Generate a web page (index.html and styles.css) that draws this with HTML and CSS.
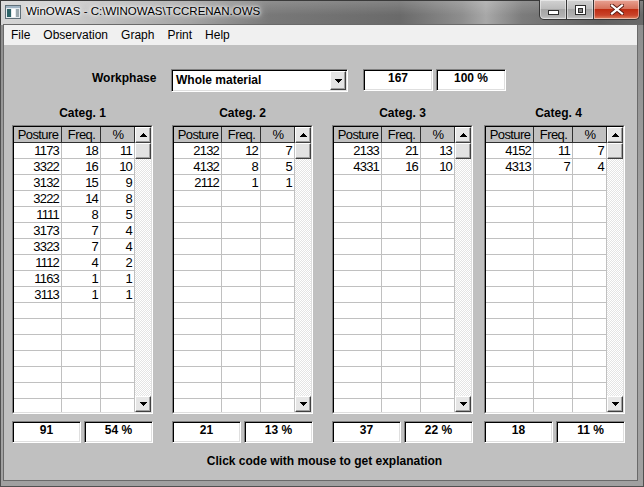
FILE: index.html
```html
<!DOCTYPE html>
<html>
<head>
<meta charset="utf-8">
<title>WinOWAS</title>
<link rel="stylesheet" href="styles.css">
</head>
<body>
<div class="window">
  <div class="titlebar">
    <svg class="app-icon" width="16" height="14" viewBox="0 0 16 14">
      <rect x="0.5" y="0.5" width="15" height="13" fill="#e4eaee" stroke="#5f6f78"/>
      <rect x="1" y="1" width="14" height="2" fill="#9fb4c4"/>
      <rect x="2" y="4" width="4" height="8" fill="#2d6468"/>
      <rect x="7" y="4" width="3" height="8" fill="#ffffff"/>
      <rect x="11" y="4" width="3" height="8" fill="#9aa8ae"/>
    </svg>
    <span class="title">WinOWAS - C:\WINOWAS\TCCRENAN.OWS</span>
    <div class="caption">
      <div class="cbtn min"><span class="min-glyph"></span></div>
      <div class="cbtn max"><span class="max-glyph"><span class="max-hole"></span></span></div>
      <div class="cbtn close">
        <svg width="14" height="11" viewBox="0 0 14 11">
          <path d="M2 1.5 L12 9.5 M12 1.5 L2 9.5" stroke="#5a1a10" stroke-width="4" stroke-linecap="square"/>
          <path d="M2 1.5 L12 9.5 M12 1.5 L2 9.5" stroke="#ffffff" stroke-width="2.2" stroke-linecap="square"/>
        </svg>
      </div>
    </div>
  </div>
  <div class="frame-body">
    <div class="menubar">
      <span class="menu-item">File</span>
      <span class="menu-item">Observation</span>
      <span class="menu-item">Graph</span>
      <span class="menu-item">Print</span>
      <span class="menu-item">Help</span>
    </div>
    <div class="client">
      <div class="wp-row">
        <div class="wp-label">Workphase</div>
        <div class="combo">
          <div class="combo-text">Whole material</div>
          <div class="combo-btn">
            <svg width="7" height="4" viewBox="0 0 7 4"><path d="M0 0h7v1h-1v1h-1v1h-1v1h-1v-1h-1v-1h-1v-1h-1z" fill="#000"/></svg>
          </div>
        </div>
        <div class="numbox">167</div>
        <div class="numbox">100 %</div>
      </div>

      <div class="cats">
        <!-- Category 1 -->
        <div class="cat">
          <div class="cat-title">Categ. 1</div>
          <div class="grid"><div class="grid-in">
            <div class="table">
              <div class="row head"><span class="c p">Posture</span><span class="c f">Freq.</span><span class="c q">%</span></div>
              <div class="row"><span class="c p">1173</span><span class="c f">18</span><span class="c q">11</span></div>
              <div class="row"><span class="c p">3322</span><span class="c f">16</span><span class="c q">10</span></div>
              <div class="row"><span class="c p">3132</span><span class="c f">15</span><span class="c q">9</span></div>
              <div class="row"><span class="c p">3222</span><span class="c f">14</span><span class="c q">8</span></div>
              <div class="row"><span class="c p">1111</span><span class="c f">8</span><span class="c q">5</span></div>
              <div class="row"><span class="c p">3173</span><span class="c f">7</span><span class="c q">4</span></div>
              <div class="row"><span class="c p">3323</span><span class="c f">7</span><span class="c q">4</span></div>
              <div class="row"><span class="c p">1112</span><span class="c f">4</span><span class="c q">2</span></div>
              <div class="row"><span class="c p">1163</span><span class="c f">1</span><span class="c q">1</span></div>
              <div class="row"><span class="c p">3113</span><span class="c f">1</span><span class="c q">1</span></div>
              <div class="filler"></div>
            </div>
            <div class="scroll">
              <div class="sbtn"><svg width="7" height="4" viewBox="0 0 7 4"><path d="M3 0h1v1h1v1h1v1h1v1H0V3h1V2h1V1h1z" fill="#000"/></svg></div>
              <div class="thumb"></div>
              <div class="track"></div>
              <div class="sbtn"><svg width="7" height="4" viewBox="0 0 7 4"><path d="M0 0h7v1h-1v1h-1v1h-1v1h-1v-1h-1v-1h-1v-1h-1z" fill="#000"/></svg></div>
            </div>
          </div></div>
          <div class="totals"><div class="tbox">91</div><div class="tbox">54 %</div></div>
        </div>

        <!-- Category 2 -->
        <div class="cat">
          <div class="cat-title">Categ. 2</div>
          <div class="grid"><div class="grid-in">
            <div class="table">
              <div class="row head"><span class="c p">Posture</span><span class="c f">Freq.</span><span class="c q">%</span></div>
              <div class="row"><span class="c p">2132</span><span class="c f">12</span><span class="c q">7</span></div>
              <div class="row"><span class="c p">4132</span><span class="c f">8</span><span class="c q">5</span></div>
              <div class="row"><span class="c p">2112</span><span class="c f">1</span><span class="c q">1</span></div>
              <div class="filler"></div>
            </div>
            <div class="scroll">
              <div class="sbtn"><svg width="7" height="4" viewBox="0 0 7 4"><path d="M3 0h1v1h1v1h1v1h1v1H0V3h1V2h1V1h1z" fill="#000"/></svg></div>
              <div class="thumb"></div>
              <div class="track"></div>
              <div class="sbtn"><svg width="7" height="4" viewBox="0 0 7 4"><path d="M0 0h7v1h-1v1h-1v1h-1v1h-1v-1h-1v-1h-1v-1h-1z" fill="#000"/></svg></div>
            </div>
          </div></div>
          <div class="totals"><div class="tbox">21</div><div class="tbox">13 %</div></div>
        </div>

        <!-- Category 3 -->
        <div class="cat">
          <div class="cat-title">Categ. 3</div>
          <div class="grid"><div class="grid-in">
            <div class="table">
              <div class="row head"><span class="c p">Posture</span><span class="c f">Freq.</span><span class="c q">%</span></div>
              <div class="row"><span class="c p">2133</span><span class="c f">21</span><span class="c q">13</span></div>
              <div class="row"><span class="c p">4331</span><span class="c f">16</span><span class="c q">10</span></div>
              <div class="filler"></div>
            </div>
            <div class="scroll">
              <div class="sbtn"><svg width="7" height="4" viewBox="0 0 7 4"><path d="M3 0h1v1h1v1h1v1h1v1H0V3h1V2h1V1h1z" fill="#000"/></svg></div>
              <div class="thumb"></div>
              <div class="track"></div>
              <div class="sbtn"><svg width="7" height="4" viewBox="0 0 7 4"><path d="M0 0h7v1h-1v1h-1v1h-1v1h-1v-1h-1v-1h-1v-1h-1z" fill="#000"/></svg></div>
            </div>
          </div></div>
          <div class="totals"><div class="tbox">37</div><div class="tbox">22 %</div></div>
        </div>

        <!-- Category 4 -->
        <div class="cat cat-last">
          <div class="cat-title cat-title-shift">Categ. 4</div>
          <div class="grid"><div class="grid-in">
            <div class="table">
              <div class="row head"><span class="c p">Posture</span><span class="c f">Freq.</span><span class="c q">%</span></div>
              <div class="row"><span class="c p">4152</span><span class="c f">11</span><span class="c q">7</span></div>
              <div class="row"><span class="c p">4313</span><span class="c f">7</span><span class="c q">4</span></div>
              <div class="filler"></div>
            </div>
            <div class="scroll">
              <div class="sbtn"><svg width="7" height="4" viewBox="0 0 7 4"><path d="M3 0h1v1h1v1h1v1h1v1H0V3h1V2h1V1h1z" fill="#000"/></svg></div>
              <div class="thumb"></div>
              <div class="track"></div>
              <div class="sbtn"><svg width="7" height="4" viewBox="0 0 7 4"><path d="M0 0h7v1h-1v1h-1v1h-1v1h-1v-1h-1v-1h-1v-1h-1z" fill="#000"/></svg></div>
            </div>
          </div></div>
          <div class="totals"><div class="tbox">18</div><div class="tbox">11 %</div></div>
        </div>
      </div>

      <div class="footer">Click code with mouse to get explanation</div>
    </div>
  </div>
</div>
</body>
</html>
```

FILE: styles.css
```css
* { box-sizing: border-box; }
html, body { margin: 0; padding: 0; }
body {
  width: 644px;
  height: 487px;
  overflow: hidden;
  font-family: "Liberation Sans", Arial, sans-serif;
  font-size: 12px;
  color: #000;
  background: #fff;
}

.window {
  width: 644px;
  height: 487px;
  display: flex;
  flex-direction: column;
  background: linear-gradient(to bottom, #8c8c8c, #a9a9a9 55%, #a0a0a0);
  box-shadow: inset 1px 0 0 #505050, inset -1px 0 0 #505050, inset 0 -1px 0 #505050;
}

/* ---------- title bar ---------- */
.titlebar {
  height: 25px;
  flex: none;
  display: flex;
  align-items: flex-start;
  background:
    linear-gradient(to bottom, rgba(255,255,255,0.18), rgba(255,255,255,0) 60%),
    linear-gradient(to right, #d6d6d6 0, #cacaca 70px, #a4a4a4 190px, #787878 270px, #6a6a6a 400px, #8e8e8e 462px, #a8a8a8 486px, #7c7c7c 522px, #606060 600px, #6a6a6a 644px);
  box-shadow: inset 0 1px 0 #3a3a3a, inset 1px 0 0 #3a3a3a, inset -1px 0 0 #3a3a3a;
}
.app-icon { flex: none; margin: 5px 0 0 5px; }
.title {
  margin: 4px 0 0 5px;
  font-size: 11.5px;
  line-height: 14px;
  white-space: nowrap;
  text-shadow: 0 0 5px #fff, 0 0 3px #fff, 0 0 8px rgba(255,255,255,0.8);
}
.caption {
  margin-left: auto;
  margin-right: 4px;
  display: flex;
  height: 20px;
}
.cbtn {
  height: 20px;
  display: flex;
  align-items: center;
  justify-content: center;
  border: 1px solid #363636;
  border-top: none;
  box-shadow: inset 0 0 0 1px rgba(255,255,255,0.45);
}
.cbtn + .cbtn { border-left: none; }
.cbtn.min, .cbtn.max {
  background: linear-gradient(to bottom, #d2d2d2, #bdbdbd 45%, #a5a5a5 50%, #b1b1b1 85%, #c9c9c9);
}
.cbtn.min { width: 28px; border-bottom-left-radius: 5px; }
.cbtn.max { width: 27px; }
.cbtn.close {
  width: 46px;
  border-bottom-right-radius: 5px;
  background: linear-gradient(to bottom, #e8a293, #d6735d 45%, #bf2d12 50%, #c9432a 80%, #e08762);
}
.min-glyph {
  width: 11px;
  height: 5px;
  margin-top: 6px;
  border: 1px solid #2e2e2e;
  background: #fff;
}
.max-glyph {
  width: 11px;
  height: 10px;
  border: 1px solid #2e2e2e;
  background: #fff;
  padding: 2px 2px 1px;
  display: flex;
}
.max-hole {
  flex: 1;
  border: 1px solid #2e2e2e;
  background: #8a8a8a;
}

/* ---------- frame body ---------- */
.frame-body {
  flex: 1;
  display: flex;
  flex-direction: column;
  margin: 0 7px 7px 4px;
  box-shadow: 0 0 0 1px #6a6a6a;
}
.menubar {
  height: 20px;
  flex: none;
  display: flex;
  align-items: center;
  gap: 1px;
  padding-left: 1px;
  background: #f0f0f0;
}
.menu-item {
  padding: 0 6px;
  line-height: 20px;
  font-size: 12px;
}

.client {
  flex: 1;
  display: flex;
  flex-direction: column;
  background: #c0c0c0;
}

/* ---------- workphase row ---------- */
.wp-row {
  display: flex;
  align-items: flex-start;
  margin-top: 24px;
  padding-left: 88px;
}
.wp-label {
  width: 65px;
  margin: 2px 14px 0 0;
  font-weight: bold;
  line-height: 14px;
  white-space: nowrap;
}
.combo, .numbox, .tbox {
  background: #fff;
  border: 1px solid;
  border-color: #808080 #ffffff #ffffff #808080;
  box-shadow: inset 1px 1px 0 #000, inset -1px -1px 0 #dfdfdf;
}
.combo {
  width: 177px;
  height: 23px;
  display: flex;
  padding: 1px;
}
.combo-text {
  flex: 1;
  font-weight: bold;
  line-height: 14px;
  padding: 2px 0 0 3px;
}
.combo-btn {
  width: 16px;
  display: flex;
  align-items: center;
  justify-content: center;
  background: #e4e4e4;
  border: 1px solid;
  border-color: #ffffff #404040 #404040 #ffffff;
  box-shadow: inset -1px -1px 0 #a0a0a0;
}
.numbox {
  width: 70px;
  height: 22px;
  font-weight: bold;
  text-align: center;
  line-height: 14px;
  padding-top: 1px;
}
.combo + .numbox { margin-left: 15px; }
.numbox + .numbox { margin-left: 3px; }

/* ---------- categories ---------- */
.cats {
  display: flex;
  margin-top: 14px;
  padding-left: 8px;
}
.cat {
  width: 141px;
  display: flex;
  flex-direction: column;
}
.cat + .cat { margin-left: 19px; }
.cat.cat-last { margin-left: 11px; }
.cat-title {
  font-weight: bold;
  line-height: 14px;
  text-align: center;
  margin-bottom: 5px;
  white-space: nowrap;
}
.cat-title-shift { padding-left: 8px; }

.grid {
  height: 289px;
  border: 1px solid;
  border-color: #808080 #ffffff #ffffff #808080;
}
.grid-in {
  height: 100%;
  display: flex;
  background: #fff;
  border: 1px solid;
  border-color: #000 #dfdfdf #dfdfdf #000;
  overflow: hidden;
}
.table {
  width: 121px;
  display: flex;
  flex-direction: column;
}
.row {
  display: flex;
  height: 16px;
  flex: none;
}
.c {
  height: 16px;
  border-right: 1px solid #c0c0c0;
  border-bottom: 1px solid #c0c0c0;
  font-size: 13px;
  line-height: 15px;
  letter-spacing: -0.8px;
  text-align: right;
  padding-right: 2px;
  white-space: nowrap;
  overflow: hidden;
}
.c.p { width: 48px; }
.c.f { width: 39px; }
.c.q { width: 34px; }
.head .c {
  background: #c0c0c0;
  border-right-color: #303030;
  border-bottom-color: #303030;
  text-align: center;
  letter-spacing: -0.6px;
  padding-right: 0;
  padding-left: 1px;
}
.filler {
  flex: 1;
  background-image:
    linear-gradient(to right, transparent 47px, #c0c0c0 47px, #c0c0c0 48px, transparent 48px, transparent 86px, #c0c0c0 86px, #c0c0c0 87px, transparent 87px, transparent 120px, #c0c0c0 120px),
    repeating-linear-gradient(to bottom, transparent 0, transparent 15px, #c0c0c0 15px, #c0c0c0 16px);
}

.scroll {
  width: 16px;
  display: flex;
  flex-direction: column;
}
.sbtn, .thumb {
  height: 16px;
  flex: none;
  display: flex;
  align-items: center;
  justify-content: center;
  background: #e6e6e6;
  border: 1px solid;
  border-color: #ffffff #404040 #404040 #ffffff;
  box-shadow: inset -1px -1px 0 #a0a0a0;
}
.thumb { background: #e2e2e2; }
.track {
  flex: 1;
  background-color: #f4f4f4;
  background-image: conic-gradient(#e4e4e4 25%, #ffffff 0 50%, #e4e4e4 0 75%, #ffffff 0);
  background-size: 2px 2px;
}

.totals {
  display: flex;
  gap: 3px;
  margin-top: 7px;
}
.tbox {
  width: 69px;
  height: 22px;
  font-weight: bold;
  text-align: center;
  line-height: 14px;
  padding-top: 1px;
}

.footer {
  margin-top: 11px;
  font-weight: bold;
  line-height: 14px;
  text-align: center;
  padding-left: 8px;
}
```
